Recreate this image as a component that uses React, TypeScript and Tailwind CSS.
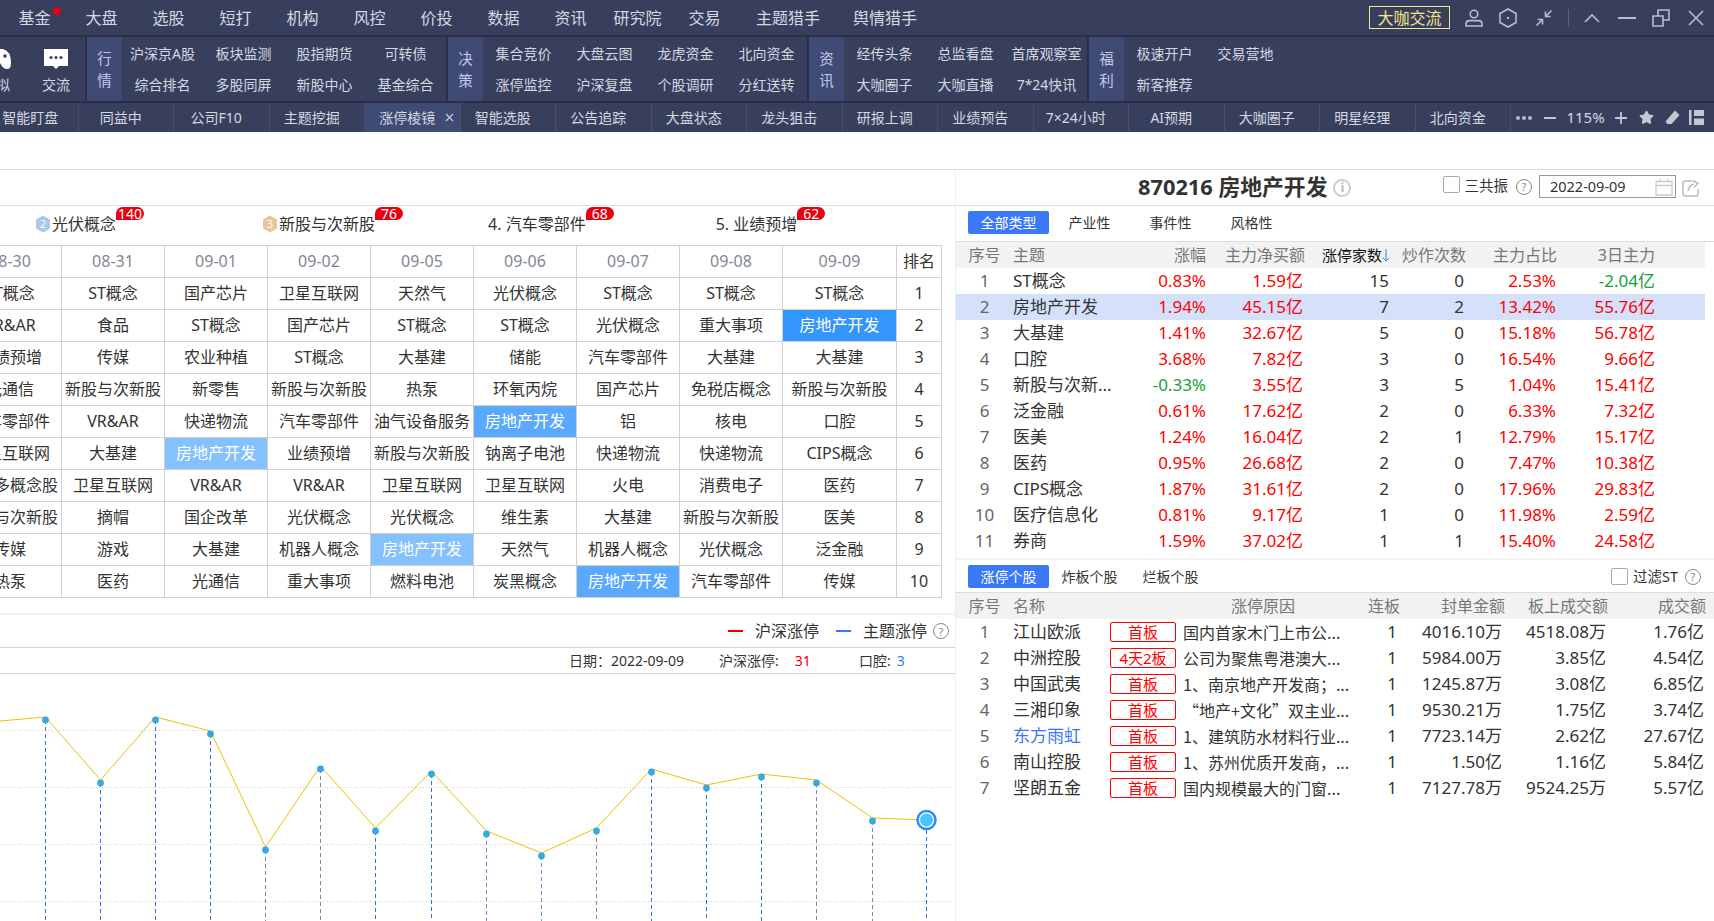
import { Minus, Plus, Star } from "lucide-react";

const menus = [
  ["基金", "w-[67px]"], ["大盘", "w-[67px]"], ["选股", "w-[67px]"], ["短打", "w-[67px]"], ["机构", "w-[67px]"],
  ["风控", "w-[67px]"], ["价投", "w-[67px]"], ["数据", "w-[67px]"], ["资讯", "w-[67px]"], ["研究院", "w-[67px]"],
  ["交易", "w-[67px]"], ["主题猎手", "w-[100px]"], ["舆情猎手", "w-[94px]"],
];

const quote = ["沪深京A股", "板块监测", "股指期货", "可转债", "综合排名", "多股同屏", "新股中心", "基金综合"];
const decide = ["集合竞价", "大盘云图", "龙虎资金", "北向资金", "涨停监控", "沪深复盘", "个股调研", "分红送转"];
const news = ["经传头条", "总监看盘", "首席观察室", "大咖圈子", "大咖直播", "7*24快讯"];
const perks = ["极速开户", "交易营地", "新客推荐"];

const tabs = ["智能盯盘", "同益中", "公司F10", "主题挖掘", "涨停棱镜", "智能选股", "公告追踪", "大盘状态", "龙头狙击", "研报上调", "业绩预告", "7×24小时", "AI预期", "大咖圈子", "明星经理", "北向资金"];

const dates = ["08-30", "08-31", "09-01", "09-02", "09-05", "09-06", "09-07", "09-08", "09-09"];

const H1 = "bg-[#3396ff] text-white";
const H2 = "bg-[#5aa9ff] text-white";
const H3 = "bg-[#85c0ff] text-white";

// 房地产开发 cells are the only highlighted ones, col index -> colour
const grid: [string[], Record<number, string>][] = [
  [["ST概念", "ST概念", "国产芯片", "卫星互联网", "天然气", "光伏概念", "ST概念", "ST概念", "ST概念"], {}],
  [["VR&AR", "食品", "ST概念", "国产芯片", "ST概念", "ST概念", "光伏概念", "重大事项", "房地产开发"], { 8: H1 }],
  [["业绩预增", "传媒", "农业种植", "ST概念", "大基建", "储能", "汽车零部件", "大基建", "大基建"], {}],
  [["光通信", "新股与次新股", "新零售", "新股与次新股", "热泵", "环氧丙烷", "国产芯片", "免税店概念", "新股与次新股"], {}],
  [["汽车零部件", "VR&AR", "快递物流", "汽车零部件", "油气设备服务", "房地产开发", "铝", "核电", "口腔"], { 5: H2 }],
  [["卫星互联网", "大基建", "房地产开发", "业绩预增", "新股与次新股", "钠离子电池", "快递物流", "快递物流", "CIPS概念"], { 2: H3 }],
  [["华为多概念股", "卫星互联网", "VR&AR", "VR&AR", "卫星互联网", "卫星互联网", "火电", "消费电子", "医药"], {}],
  [["新股与次新股", "摘帽", "国企改革", "光伏概念", "光伏概念", "维生素", "大基建", "新股与次新股", "医美"], {}],
  [["传媒", "游戏", "大基建", "机器人概念", "房地产开发", "天然气", "机器人概念", "光伏概念", "泛金融"], { 4: H3 }],
  [["热泵", "医药", "光通信", "重大事项", "燃料电池", "炭黑概念", "房地产开发", "汽车零部件", "传媒"], { 6: H2 }],
];

const themes = [
  ["1", "ST概念", "0.83%", "1.59亿", "15", "0", "2.53%", "-2.04亿"],
  ["2", "房地产开发", "1.94%", "45.15亿", "7", "2", "13.42%", "55.76亿"],
  ["3", "大基建", "1.41%", "32.67亿", "5", "0", "15.18%", "56.78亿"],
  ["4", "口腔", "3.68%", "7.82亿", "3", "0", "16.54%", "9.66亿"],
  ["5", "新股与次新...", "-0.33%", "3.55亿", "3", "5", "1.04%", "15.41亿"],
  ["6", "泛金融", "0.61%", "17.62亿", "2", "0", "6.33%", "7.32亿"],
  ["7", "医美", "1.24%", "16.04亿", "2", "1", "12.79%", "15.17亿"],
  ["8", "医药", "0.95%", "26.68亿", "2", "0", "7.47%", "10.38亿"],
  ["9", "CIPS概念", "1.87%", "31.61亿", "2", "0", "17.96%", "29.83亿"],
  ["10", "医疗信息化", "0.81%", "9.17亿", "1", "0", "11.98%", "2.59亿"],
  ["11", "券商", "1.59%", "37.02亿", "1", "1", "15.40%", "24.58亿"],
];

const stocks = [
  ["1", "江山欧派", "首板", "国内首家木门上市公...", "1", "4016.10万", "4518.08万", "1.76亿"],
  ["2", "中洲控股", "4天2板", "公司为聚焦粤港澳大...", "1", "5984.00万", "3.85亿", "4.54亿"],
  ["3", "中国武夷", "首板", "1、南京地产开发商；...", "1", "1245.87万", "3.08亿", "6.85亿"],
  ["4", "三湘印象", "首板", "“地产+文化”双主业...", "1", "9530.21万", "1.75亿", "3.74亿"],
  ["5", "东方雨虹", "首板", "1、建筑防水材料行业...", "1", "7723.14万", "2.62亿", "27.67亿"],
  ["6", "南山控股", "首板", "1、苏州优质开发商，...", "1", "1.50亿", "1.16亿", "5.84亿"],
  ["7", "坚朗五金", "首板", "国内规模最大的门窗...", "1", "7127.78万", "9524.25万", "5.57亿"],
];

const themeCols = "grid grid-cols-[57px_110px_83px_99px_85px_76px_91px_98px]";
const stockCols = "grid grid-cols-[57px_97px_66px_174px_50px_105px_103px_98px]";

// line is drawn a little above the dots, same as the source chart
const points: [number, number, string][] = [
  [45.5, 46, "#2f6fed"], [100.5, 109, "#2f6fed"], [155.5, 46, "#2f6fed"], [210.5, 60, "#2f6fed"],
  [265.5, 176, "#7d8aa5"], [320.5, 95, "#7d8aa5"], [375.5, 157, "#2f6fed"], [431.5, 100, "#2f6fed"],
  [486.5, 160, "#6f8fc9"], [541.5, 182, "#6f8fc9"], [596.5, 157, "#7d8aa5"], [651.5, 98, "#2f6fed"],
  [706.5, 114, "#2f6fed"], [761.5, 103, "#2f6fed"], [816.5, 109, "#7d8aa5"], [872.5, 147, "#7d8aa5"],
];

function UserIcon() {
  return (
    <svg width="20" height="20" viewBox="0 0 20 20" fill="none" stroke="#b9bdcb" strokeWidth="1.6">
      <circle cx="10" cy="6" r="3.8" />
      <path d="M2 18v-2c0-2 1.6-3.4 3.5-3.4h9c1.9 0 3.5 1.4 3.5 3.4v2z" />
    </svg>
  );
}

function HexIcon() {
  return (
    <svg width="20" height="20" viewBox="0 0 20 20" fill="none" stroke="#b9bdcb" strokeWidth="1.6">
      <path d="M10 1l8 4.500v9L10 19l-8-4.500v-9z" />
      <circle cx="10" cy="10" r="1.2" fill="#b9bdcb" stroke="none" />
    </svg>
  );
}

function ShrinkIcon() {
  return (
    <svg width="18" height="18" viewBox="0 0 18 18" fill="none" stroke="#b9bdcb" strokeWidth="1.6">
      <path d="M16.500 1.500L10.500 7.500M10.500 2.500v5h5M1.500 16.500l6-6M2.500 10.500h5v5" />
    </svg>
  );
}

function RestoreIcon() {
  return (
    <svg width="18" height="18" viewBox="0 0 18 18" fill="none" stroke="#b9bdcb" strokeWidth="1.6">
      <path d="M1 7h10v10H1zM6 7V1h11v10h-6" />
    </svg>
  );
}

function CloseIcon() {
  return (
    <svg width="16" height="16" viewBox="0 0 16 16" fill="none" stroke="#b9bdcb" strokeWidth="1.6">
      <path d="M1 1l14 14M15 1L1 15" />
    </svg>
  );
}

function QuestionMark({ size = 16 }: { size?: number }) {
  return (
    <span
      className="flex-none flex items-center justify-center rounded-full border border-[#888] text-[#888] text-[11px] leading-none"
      style={{ width: size, height: size }}
    >
      ?
    </span>
  );
}

function Checkbox() {
  return <span className="block flex-none w-[17px] h-[17px] border border-[#aaa] rounded-[2px] bg-white" />;
}

function RankHex({ n, color }: { n: string; color: string }) {
  return (
    <svg width="16" height="18" viewBox="0 0 16 18" className="flex-none">
      <path d="M8 0.500l7 4v9l-7 4-7-4v-9z" fill={color} />
      <text x="8" y="13" textAnchor="middle" fontSize="11" fill="#fff">{n}</text>
    </svg>
  );
}

function Theme({ label, count, rank, color, className }: { label: string; count: string; rank?: string; color?: string; className: string }) {
  return (
    <div className={`relative flex items-center gap-px text-[16px] text-[#333] ${className}`}>
      {rank && color && <RankHex n={rank} color={color} />}
      <span>{label}</span>
      <span className="absolute left-full -top-[5px] w-[28px] h-[13px] flex items-center justify-center bg-[#e60012] text-white text-[14px] rounded-[7px] rounded-bl-none">
        {count}
      </span>
    </div>
  );
}

function Section({ label, items, cols }: { label: string; items: string[]; cols: string }) {
  return (
    <div className="flex-none flex bg-[#383f5c]">
      <div className="w-[35px] flex flex-col items-center justify-center bg-[#3f4a75] text-[#c3cbe6] text-[14.5px] leading-[22px]">
        <span>{label[0]}</span>
        <span>{label[1]}</span>
      </div>
      <div className={`grid ${cols} grid-rows-[32px_31px] text-[14px] text-[#d5d8e2]`}>
        {items.map(t => (
          <div key={t} className="flex items-center justify-center">{t}</div>
        ))}
      </div>
    </div>
  );
}

function TopBar() {
  return (
    <div className="flex-none h-[35px] bg-[#383f5c] flex items-center pl-px">
      {menus.map(([t, w]) => (
        <div key={t} className={`relative flex-none ${w} text-center text-[16px] text-[#d5d8e2]`}>
          {t}
          {t === "基金" && <span className="absolute left-[52px] top-[1px] w-[8px] h-[8px] rounded-full bg-[#e60012]" />}
        </div>
      ))}
      <div className="ml-auto flex items-center">
        <div className="w-[81px] h-[23px] flex items-center justify-center border border-[#f5e58c] text-[#f5e58c] text-[16px]">大咖交流</div>
        <div className="w-[34px] ml-[7px] flex justify-center"><UserIcon /></div>
        <div className="w-[34px] flex justify-center"><HexIcon /></div>
        <div className="w-[34px] ml-[2px] flex justify-center"><ShrinkIcon /></div>
        <div className="w-px h-[18px] ml-[7px] bg-[#5c637f]" />
        <div className="w-[34px] ml-[6px] flex justify-center">
          <svg width="18" height="12" viewBox="0 0 18 12" fill="none" stroke="#b9bdcb" strokeWidth="1.7"><path d="M2 10l7-7 7 7" /></svg>
        </div>
        <div className="w-[34px] ml-px flex justify-center">
          <div className="w-[18px] h-[2px] bg-[#b9bdcb]" />
        </div>
        <div className="w-[34px] flex justify-center"><RestoreIcon /></div>
        <div className="w-[34px] ml-px mr-px flex justify-center"><CloseIcon /></div>
      </div>
    </div>
  );
}

function ToolRow() {
  return (
    <div className="flex-none h-[64px] mt-[2px] flex gap-[2px] overflow-hidden">
      <div className="flex-none w-[85px] flex bg-[#383f5c] overflow-hidden">
        <div className="flex-none w-[60px] -ml-[34px] flex flex-col items-center">
          <svg width="30" height="20" viewBox="0 0 30 20" className="mt-[12px]">
            <path d="M8 0H22Q30 2 30 14Q30 20 26 20Q22 20 19 14H11Q8 20 4 20Q0 20 0 14Q0 2 8 0Z" fill="#fff" />
            <circle cx="24" cy="7" r="1.8" fill="#383f5c" />
          </svg>
          <span className="mt-[5px] text-[14px] text-[#d5d8e2] whitespace-nowrap">模拟</span>
        </div>
        <div className="flex-none w-[60px] flex flex-col items-center">
          <svg width="24" height="20" viewBox="0 0 24 20" className="mt-[12px]">
            <path d="M0 0H24V17H15L12 20L9 17H0Z" fill="#fff" />
            <circle cx="7" cy="8.5" r="1.5" fill="#383f5c" />
            <circle cx="12" cy="8.5" r="1.5" fill="#383f5c" />
            <circle cx="17" cy="8.5" r="1.5" fill="#383f5c" />
          </svg>
          <span className="mt-[5px] text-[14px] text-[#d5d8e2]">交流</span>
        </div>
      </div>
      <Section label="行情" items={quote} cols="grid-cols-[repeat(4,81px)]" />
      <Section label="决策" items={decide} cols="grid-cols-[repeat(4,81px)]" />
      <Section label="资讯" items={news} cols="grid-cols-[repeat(3,81px)]" />
      <div className="flex-1 flex bg-[#383f5c]">
        <div className="w-[35px] flex flex-col items-center justify-center bg-[#3f4a75] text-[#c3cbe6] text-[14.5px] leading-[22px]">
          <span>福</span>
          <span>利</span>
        </div>
        <div className="grid grid-cols-[repeat(2,81px)] grid-rows-[32px_31px] text-[14px] text-[#d5d8e2]">
          {perks.map(t => (
            <div key={t} className="flex items-center justify-center">{t}</div>
          ))}
        </div>
      </div>
    </div>
  );
}

function TabRow() {
  return (
    <div className="flex-none h-[29px] mt-[2px] bg-[#383f5c] flex items-center text-[14px] text-[#d5d8e2]">
      <div className="flex -ml-[17px] h-full">
        {tabs.map((t, i) => (
          <div
            key={t}
            className={`relative flex-none w-[95.5px] flex items-center justify-center border-r border-[#474e70] ${i > 0 ? "pr-[10px]" : ""} ${t === "涨停棱镜" ? "bg-[#3f4a75]" : ""}`}
          >
            {t}
            {t === "涨停棱镜" && (
              <svg width="9" height="9" viewBox="0 0 9 9" className="absolute right-[6px] top-[10px]" stroke="#c3cbe6" strokeWidth="1.2"><path d="M1 1l7 7M8 1L1 8" /></svg>
            )}
          </div>
        ))}
      </div>
      <div className="flex-1 flex items-center text-[#d5d8e2]">
        <div className="ml-[5px] flex gap-[2px]">
          <i className="w-[4px] h-[4px] rounded-full bg-[#b9bdcb]" />
          <i className="w-[4px] h-[4px] rounded-full bg-[#b9bdcb]" />
          <i className="w-[4px] h-[4px] rounded-full bg-[#b9bdcb]" />
        </div>
        <Minus size={18} strokeWidth={2.4} className="ml-[9px] text-[#c5c8d2]" />
        <span className="w-[53px] text-center text-[15px]">115%</span>
        <Plus size={18} strokeWidth={2.4} className="text-[#c5c8d2]" />
        <Star size={15} fill="#c5c8d2" className="ml-[9px] text-[#c5c8d2]" />
        <svg width="15" height="15" viewBox="0 0 15 15" className="ml-[11px]" fill="#c5c8d2">
          <path d="M10 0.5L14.5 5L6.5 14H2.5L0.5 11.5Z" />
        </svg>
        <svg width="15" height="15" viewBox="0 0 15 15" className="ml-[9px]" fill="#c5c8d2">
          <path d="M0 0H2.5V15H0ZM5 0H15V6H5ZM5 8.500H15V15H5Z" />
        </svg>
      </div>
    </div>
  );
}

function LimitTable() {
  const cell = "h-[32px] pb-[2px] flex items-center justify-center border-r border-b border-[#d0d0d0] whitespace-nowrap";
  return (
    <div className="-ml-[41px] w-[983px] border-t border-[#d0d0d0] text-[16px] text-[#333]">
      <div className="grid grid-cols-[repeat(8,103px)_114px_45px]">
        {dates.map(d => (
          <div key={d} className={`${cell} text-[#7f8794]`}>{d}</div>
        ))}
        <div className={cell}>排名</div>
        {grid.map(([cells, marks], r) => (
          <div key={r} className="contents">
            {cells.map((c, i) => (
              <div key={i} className={`${cell} ${marks[i] ?? ""}`}>{c}</div>
            ))}
            <div className={cell}>{r + 1}</div>
          </div>
        ))}
      </div>
    </div>
  );
}

function Chart() {
  const line = [[0, 47], ...points.map(p => [p[0], p[1] - 3]), [926.5, 146]].map(p => p.join(",")).join(" ");
  return (
    <svg width="955" height="247" viewBox="0 0 955 247" className="flex-none block">
      {[56, 113, 170, 227].map(y => (
        <line key={y} x1="0" x2="952" y1={y + 0.5} y2={y + 0.5} stroke="#cfcfcf" strokeDasharray="1 2" />
      ))}
      {points.map(([x, y, c]) => (
        <line key={x} x1={x} x2={x} y1={y} y2="247" stroke={c} strokeDasharray="4 3" />
      ))}
      <line x1="926.5" x2="926.5" y1="156" y2="247" stroke="#2f6fed" strokeDasharray="4 3" />
      <polyline points={line} fill="none" stroke="#f0c000" strokeWidth="1" />
      {points.map(([x, y]) => (
        <circle key={x} cx={x} cy={y} r="3.4" fill="#35a8e8" />
      ))}
      <circle cx="926.5" cy="146" r="9" fill="#fff" stroke="#2a8cff" strokeWidth="2.5" />
      <circle cx="926.5" cy="146" r="6.5" fill="#4cc3ff" />
    </svg>
  );
}

function LeftPane() {
  return (
    <div className="flex-none w-[955px] flex flex-col overflow-hidden">
      <div className="flex-none h-[36px] border-b border-[#ddd]" />
      <div className="flex-none h-[39px] pb-[4px] flex items-center pl-[35px]">
        <Theme label="光伏概念" count="140" rank="2" color="#a9c8ea" className="" />
        <Theme label="新股与次新股" count="76" rank="3" color="#ecc39a" className="ml-[146px]" />
        <Theme label="4. 汽车零部件" count="68" className="ml-[113px]" />
        <Theme label="5. 业绩预增" count="62" className="ml-[130px]" />
      </div>
      <LimitTable />
      <div className="flex-none h-[2px] mt-[15px] bg-[#f2f2f2]" />
      <div className="flex-none h-[33px] flex items-center justify-end gap-[12px] pr-[6px] border-b border-[#d5d5d5] text-[16px] text-[#333]">
        <span className="w-[15px] h-[2px] bg-[#e60012]" />
        <span className="mr-[5px]">沪深涨停</span>
        <span className="w-[15px] h-[2px] bg-[#3a78f5]" />
        <span className="-mr-[6px]">主题涨停</span>
        <QuestionMark />
      </div>
      <div className="flex-none h-[26px] flex items-center pl-[569px] border-b border-[#d5d5d5] text-[14px] text-[#333]">
        <span>日期：2022-09-09</span>
        <span className="ml-[35px]">沪深涨停:</span>
        <span className="ml-[16px] text-[#e60012]">31</span>
        <span className="ml-[48px]">口腔:</span>
        <span className="ml-[6px] text-[#3a78f5]">3</span>
      </div>
      <Chart />
    </div>
  );
}

function TitleBand() {
  return (
    <div className="flex-none h-[36px] flex items-center pl-[182px] border-b border-[#ddd]">
      <span className="text-[21.8px] font-bold text-[#333] whitespace-nowrap">870216 房地产开发</span>
      <span className="ml-[6px] flex-none w-[18px] h-[18px] flex items-center justify-center rounded-full border-2 border-[#ccc] text-[#bbb] text-[13px] font-bold">i</span>
      <div className="ml-[92px] mb-[7px]"><Checkbox /></div>
      <span className="ml-[4px] mb-[4px] text-[14.5px] text-[#333]">三共振</span>
      <div className="ml-[8px] mb-[2px]"><QuestionMark /></div>
      <div className="ml-[7px] mb-[2px] flex-none w-[137px] h-[23px] flex items-center justify-between pl-[10px] pr-[2px] border border-[#999] text-[14.5px] text-[#333]">
        2022-09-09
        <svg width="18" height="18" viewBox="0 0 18 18" fill="none" stroke="#ccc" strokeWidth="1.3"><path d="M1 3.500H17V17H1ZM1 7.500H17M5 1V4M13 1V4" /></svg>
      </div>
      <svg width="18" height="18" viewBox="0 0 18 18" className="ml-[6px]" fill="none" stroke="#bbb" strokeWidth="1.5"><path d="M10 2H3Q1 2 1 4V15Q1 17 3 17H14Q16 17 16 15V10M6 12Q7 6 12 5M11 1.500L16 4.500L12 8.500" /></svg>
    </div>
  );
}

function TabButtons({ items }: { items: string[] }) {
  return (
    <div className="flex">
      {items.map((t, i) => (
        <div
          key={t}
          className={`w-[81px] h-[23px] flex items-center justify-center text-[14px] ${i === 0 ? "bg-[#3a78f5] text-white rounded-[2px]" : "text-[#333]"}`}
        >
          {t}
        </div>
      ))}
    </div>
  );
}

function ThemeTable() {
  const tone = (v: string) => (v.startsWith("-") ? "text-[#16a03c]" : "text-[#f00]");
  return (
    <div className="flex-none w-[749px]">
      <div className={`${themeCols} h-[26px] items-center bg-[#f2f2f2] text-[16px] text-[#777] whitespace-nowrap`}>
        <span className="text-center">序号</span>
        <span>主题</span>
        <span className="text-right">涨幅</span>
        <span className="text-right">主力净买额</span>
        <span className="flex items-center justify-end text-[15px] text-[#111]">
          涨停家数
          <svg width="8" height="14" viewBox="0 0 8 14" fill="none" stroke="#3a78f5" strokeWidth="1"><path d="M4 1V13M1 10l3 3 3-3" /></svg>
        </span>
        <span className="text-right">炒作次数</span>
        <span className="text-right">主力占比</span>
        <span className="text-right">3日主力</span>
      </div>
      {themes.map(r => (
        <div key={r[0]} className={`${themeCols} h-[26px] items-center text-[17px] whitespace-nowrap ${r[0] === "2" ? "bg-[#d5e1fb]" : ""}`}>
          <span className="text-center text-[#666]">{r[0]}</span>
          <span className="text-[#333]">{r[1]}</span>
          <span className={`text-right ${tone(r[2])}`}>{r[2]}</span>
          <span className={`text-right pr-[2px] ${tone(r[3])}`}>{r[3]}</span>
          <span className="text-right text-[#333] pr-[1px]">{r[4]}</span>
          <span className="text-right text-[#333] pr-[2px]">{r[5]}</span>
          <span className={`text-right pr-[1px] ${tone(r[6])}`}>{r[6]}</span>
          <span className={`text-right ${tone(r[7])}`}>{r[7]}</span>
        </div>
      ))}
    </div>
  );
}

function StockTable() {
  return (
    <div className="flex-none">
      <div className={`${stockCols} h-[26px] items-center bg-[#f2f2f2] text-[16px] text-[#777] whitespace-nowrap`}>
        <span className="text-center">序号</span>
        <span>名称</span>
        <span />
        <span className="text-center">涨停原因</span>
        <span className="text-right">连板</span>
        <span className="text-right">封单金额</span>
        <span className="text-right">板上成交额</span>
        <span className="text-right">成交额</span>
      </div>
      {stocks.map(r => (
        <div key={r[0]} className={`${stockCols} h-[26px] items-center text-[17px] text-[#333] whitespace-nowrap`}>
          <span className="text-center text-[#666]">{r[0]}</span>
          <span className={r[1] === "东方雨虹" ? "text-[#3a78f5]" : ""}>{r[1]}</span>
          <span className="h-[20px] flex items-center justify-center border border-[#f00] rounded-[2px] text-[15px] text-[#f00]">{r[2]}</span>
          <span className="pl-[7px] text-[16px] font-['Noto_Sans_CJK_SC',sans-serif] overflow-hidden">{r[3]}</span>
          <span className="text-right pr-[3px]">{r[4]}</span>
          <span className="text-right pr-[3px]">{r[5]}</span>
          <span className="text-right pr-[2px]">{r[6]}</span>
          <span className="text-right pr-[2px]">{r[7]}</span>
        </div>
      ))}
    </div>
  );
}

function RightPane() {
  return (
    <div className="flex-1 min-w-0 flex flex-col border-l border-[#eee]">
      <TitleBand />
      <div className="flex-none h-[36px] pt-[5px] pl-[12px] border-b border-[#ddd]">
        <TabButtons items={["全部类型", "产业性", "事件性", "风格性"]} />
      </div>
      <ThemeTable />
      <div className="flex-none h-[2px] mt-[4px] bg-[#f2f2f2]" />
      <div className="flex-none h-[33px] pt-[5px] pl-[12px] flex border-b border-[#ddd]">
        <TabButtons items={["涨停个股", "炸板个股", "烂板个股"]} />
        <div className="ml-auto pr-[13px] h-[23px] flex items-center text-[14.5px] text-[#333]">
          <Checkbox />
          <span className="ml-[5px] mr-[7px]">过滤ST</span>
          <QuestionMark />
        </div>
      </div>
      <StockTable />
    </div>
  );
}

export default function App() {
  return (
    <div className="w-[1714px] h-[921px] overflow-hidden flex flex-col bg-white font-['Noto_Sans','Noto_Sans_CJK_SC',sans-serif]">
      <div className="flex-none h-[132px] flex flex-col bg-[#2a2f47]">
        <TopBar />
        <ToolRow />
        <TabRow />
      </div>
      <div className="flex-none h-[38px] border-b border-[#ddd]" />
      <div className="flex-1 min-h-0 flex">
        <LeftPane />
        <RightPane />
      </div>
    </div>
  );
}
